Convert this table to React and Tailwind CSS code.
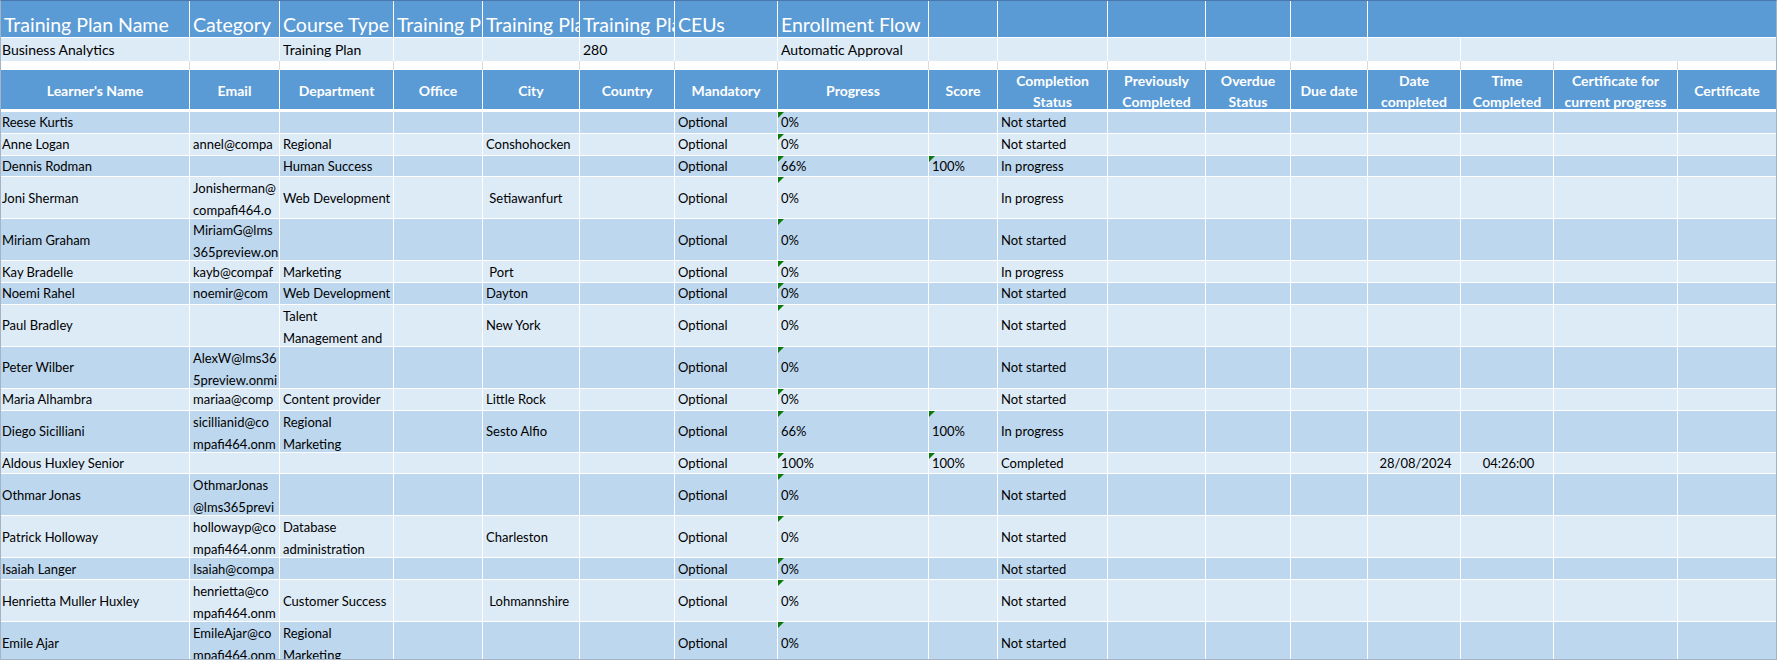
import React from 'react';

const W = ['w-[189px]','w-[90px]','w-[114px]','w-[89px]','w-[97px]','w-[95px]','w-[103px]','w-[151px]','w-[69px]','w-[110px]','w-[98px]','w-[85px]','w-[77px]','w-[93px]','w-[93px]','w-[124px]','w-[98px]'];

const top1 = ['Training Plan Name','Category','Course Type','Training Plan Duration','Training Plan Start','Training Plan Hours','CEUs','Enrollment Flow','','','','',''];
const top2 = ['Business Analytics','','Training Plan','','','280','','Automatic Approval','','','','','',''];

const heads = [
  ["Learner's Name"],['Email'],['Department'],['Office'],['City'],['Country'],['Mandatory'],['Progress'],['Score'],
  ['Completion','Status'],['Previously','Completed'],['Overdue','Status'],['Due date'],['Date','completed'],['Time','Completed'],
  ['Certificate for','current progress'],['Certificate'],
];

const rows = [
  { c: ['Reese Kurtis','','','','','','Optional','0%','','Not started'] },
  { c: ['Anne Logan','annel@compa','Regional','','Conshohocken','','Optional','0%','','Not started'] },
  { c: ['Dennis Rodman','','Human Success','','','','Optional','66%','100%','In progress'], s: true },
  { c: ['Joni Sherman',['Jonisherman@','compafi464.o'],'Web Development','',' Setiawanfurt','','Optional','0%','','In progress'], t: true },
  { c: ['Miriam Graham',['MiriamG@lms','365preview.on'],'','','','','Optional','0%','','Not started'], t: true },
  { c: ['Kay Bradelle','kayb@compaf','Marketing','',' Port','','Optional','0%','','In progress'] },
  { c: ['Noemi Rahel','noemir@com','Web Development','','Dayton','','Optional','0%','','Not started'] },
  { c: ['Paul Bradley','',['Talent','Management and'],'','New York','','Optional','0%','','Not started'], t: true },
  { c: ['Peter Wilber',['AlexW@lms36','5preview.onmi'],'','','','','Optional','0%','','Not started'], t: true },
  { c: ['Maria Alhambra','mariaa@comp','Content provider','','Little Rock','','Optional','0%','','Not started'] },
  { c: ['Diego Sicilliani',['sicillianid@co','mpafi464.onm'],['Regional','Marketing'],'','Sesto Alfio','','Optional','66%','100%','In progress'], t: true, s: true },
  { c: ['Aldous Huxley Senior','','','','','','Optional','100%','100%','Completed'], s: true, date: '28/08/2024', time: '04:26:00' },
  { c: ['Othmar Jonas',['OthmarJonas','@lms365previ'],'','','','','Optional','0%','','Not started'], t: true },
  { c: ['Patrick Holloway',['hollowayp@co','mpafi464.onm'],['Database','administration'],'','Charleston','','Optional','0%','','Not started'], t: true },
  { c: ['Isaiah Langer','Isaiah@compa','','','','','Optional','0%','','Not started'] },
  { c: ['Henrietta Muller Huxley',['henrietta@co','mpafi464.onm'],'Customer Success','',' Lohmannshire','','Optional','0%','','Not started'], t: true },
  { c: ['Emile Ajar',['EmileAjar@co','mpafi464.onm'],['Regional','Marketing'],'','','','Optional','0%','','Not started'], t: true },
];

function Tri() {
  return <span className="absolute top-0 left-0 w-0 h-0 border-t-[6px] border-r-[6px] border-t-[#0a7a0a] border-r-transparent" />;
}

function DataCell({ w, value, tri, center, first }) {
  const multi = Array.isArray(value);
  return (
    <div className={`relative ${w} shrink-0 h-full border-r border-white last:border-r-0 overflow-hidden whitespace-pre flex ${multi ? 'flex-col justify-start' : 'items-center'} ${center ? 'justify-center' : ''} ${first ? 'pl-[1px]' : 'pl-[3px]'}`}>
      {tri && <Tri />}
      {multi ? value.map((l, i) => <div key={i} className="leading-[22px]">{l}</div>) : <span className="leading-[20px]">{value}</span>}
    </div>
  );
}

export default function App() {
  return (
    <div className="w-[1777px] h-[660px] overflow-hidden bg-white border border-[#a3b4c6] border-t-[#4a78ad] font-['Lato',sans-serif] text-[13px] text-black">
      {/* top header row */}
      <div className="flex h-[37px] border-b border-white bg-[#5b9bd5] text-white text-[19.5px]">
        {top1.map((t, i) => (
          <div key={i} className={`${W[i]} shrink-0 border-r border-white overflow-hidden whitespace-nowrap pl-[3px] flex items-center pt-[12px]`}>{t}</div>
        ))}
        <div className="flex-1" />
      </div>
      {/* top value row */}
      <div className="flex h-[23px] bg-[#ddebf7] text-[14px]">
        {top2.map((t, i) => (
          <div key={i} className={`${W[i]} shrink-0 border-r border-white overflow-hidden whitespace-nowrap ${i === 0 ? 'pl-[1px]' : 'pl-[3px]'} flex items-center`}>{t}</div>
        ))}
        <div className="flex-1" />
      </div>
      {/* gap row */}
      <div className="flex h-[9px] bg-white">
        {W.map((w, i) => (
          <div key={i} className={`${w} shrink-0 border-r border-[#dcdcdc] last:border-r-0`} />
        ))}
      </div>
      {/* table header */}
      <div className="flex h-[39px] bg-[#5b9bd5] text-white font-bold text-[14px] border-b-[3px] border-white box-content">
        {heads.map((h, i) => (
          <div key={i} className={`${W[i]} shrink-0 border-r border-white last:border-r-0 overflow-hidden whitespace-nowrap flex flex-col items-center justify-center pt-[3px]`}>
            {h.map((l, j) => <div key={j} className="leading-[21.5px]">{l}</div>)}
          </div>
        ))}
      </div>
      {/* data rows */}
      {rows.map((r, ri) => (
        <div key={ri} className={`flex ${r.t ? 'h-[42px]' : 'h-[21.75px]'} border-b border-white ${ri % 2 === 0 ? 'bg-[#bdd7ee]' : 'bg-[#ddebf7]'}`}>
          {W.map((w, ci) => {
            let v = '';
            if (ci < 10) v = r.c[ci];
            if (ci === 13) v = r.date || '';
            if (ci === 14) v = r.time || '';
            const tri = ci === 7 || (ci === 8 && r.s);
            return <DataCell key={ci} w={w} value={v} tri={tri} center={ci === 13 || ci === 14} first={ci === 0} />;
          })}
        </div>
      ))}
    </div>
  );
}
